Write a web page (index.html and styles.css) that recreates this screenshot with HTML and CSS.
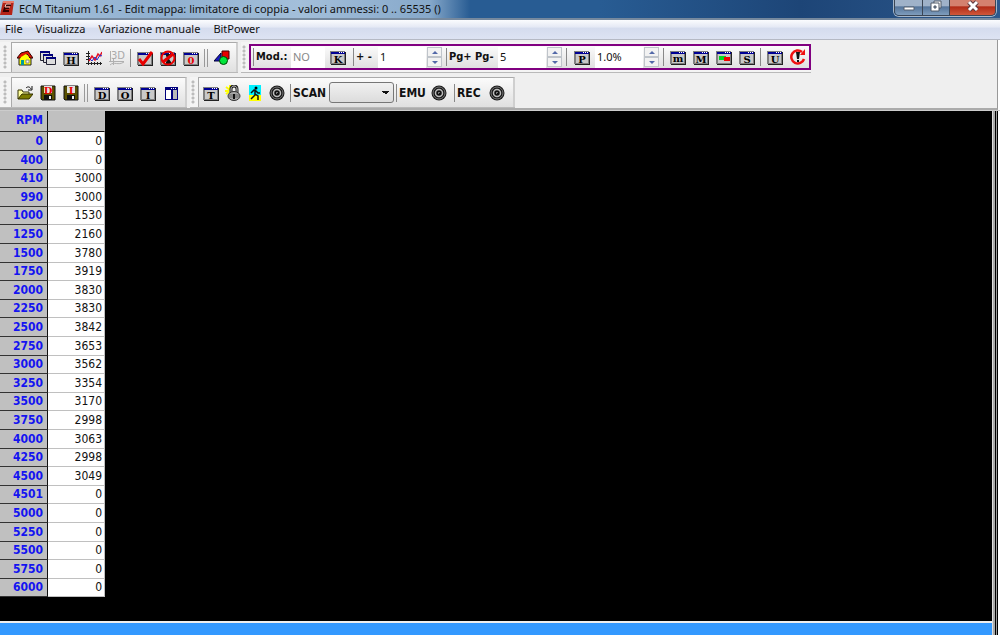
FILE: index.html
```html
<!DOCTYPE html>
<html lang="it">
<head>
<meta charset="utf-8">
<title>ECM Titanium 1.61</title>
<link rel="stylesheet" href="styles.css">
</head>
<body>
<svg class="defs" aria-hidden="true">
  <symbol id="win" viewBox="0 0 16 16">
    <path d="M0 2h15v13H0z" fill="#808080"/><path d="M2 5h12v9H2z" fill="#c9c9c9"/>
    <path d="M1 3h14v2H1z" fill="#000094"/><path d="M9 3h1v1H9zm2 0h1v1h-1zm2 0h1v1h-1z" fill="#fff"/>
    <path d="M15 3h1v13H1v-1h14z" fill="#222"/>
  </symbol>
  <symbol id="knob" viewBox="0 0 16 16">
    <circle cx="8" cy="8" r="7.500" fill="#1a1a1a"/><circle cx="8" cy="8" r="6" fill="none" stroke="#777"/>
    <circle cx="8" cy="8" r="3.500" fill="#111" stroke="#bdbdbd" stroke-width="1.500"/><path d="M7 7h2v1H8v1H7z" fill="#777"/>
  </symbol>
  <symbol id="disk" viewBox="0 0 16 16">
    <path d="M1 1h14v14H2l-1-1z" fill="#5a5200" stroke="#111"/><path d="M4 1h8v7H4z" fill="#e4e4e4"/>
    <path d="M4 10h8v5H4z" fill="#111"/><path d="M9 11h2v3H9z" fill="#eee"/>
  </symbol>
</svg>

<header class="titlebar">
  <svg class="logo" viewBox="0 0 14 16"><path d="M3 1h11l-2 14H0z" fill="#b52418"/><path d="M3 1h11v2H3z" fill="#e77a68"/><path d="M11 5H6L4 11h5M5 8h4" fill="none" stroke="#300" stroke-width="2"/><path d="M11 4H6L5 7h5" fill="none" stroke="#f5c8bc"/></svg>
  <h1>ECM Titanium 1.61 - Edit mappa: limitatore di coppia - valori ammessi: 0 .. 65535 ()</h1>
  <div class="winbtns">
    <button class="wb min" aria-label="Riduci"><svg viewBox="0 0 16 14"><path d="M3 7h10v3H3z" fill="#fff" stroke="#56616f"/></svg></button>
    <button class="wb max" aria-label="Ripristina"><svg viewBox="0 0 16 14"><path d="M6 1h7v7H6z" fill="#f4f4f4" stroke="#505b68"/><path d="M3 3h8v8H3z" fill="#fff" stroke="#505b68"/><path d="M6 6h2v2H6z" fill="#8195ac" stroke="#505b68"/></svg></button>
    <button class="wb close" aria-label="Chiudi"><svg viewBox="0 0 16 14"><path d="M4 2l8 8M12 2l-8 8" stroke="#5b3a40" stroke-width="5"/><path d="M4 2l8 8M12 2l-8 8" stroke="#fff" stroke-width="3"/></svg></button>
  </div>
</header>

<nav class="menu">
  <button>File</button><button>Visualizza</button><button>Variazione manuale</button><button>BitPower</button>
</nav>

<section class="bars">
  <div class="row">
    <div class="band"><i class="grip"></i>
      <div class="panel">
        <button class="tb" aria-label="Home"><svg viewBox="0 0 16 16"><path d="M2 7h12v8H2z" fill="#ff0" stroke="#222"/><path d="M0 8l4-5 7-2 5 7h-3l-3-4-6 4z" fill="#e21500" stroke="#300"/><path d="M4 7l5-3 3 3v2H3z" fill="#ff0"/><path d="M4 10h3v5H4z" fill="#009c9c"/><path d="M9 10h3v3H9z" fill="#fff" stroke="#888"/></svg></button>
        <button class="tb" aria-label="Finestre"><svg viewBox="0 0 16 16"><g fill="#ddd" stroke="#223"><path d="M.5 1.500h9v9h-9z"/><path d="M3.500 4.500h9v8h-9z"/><path d="M6.500 7.500h9v7h-9z"/></g><path d="M0 1h10v2H0zM3 4h10v2H3zM6 7h10v2H6z" fill="#00007c"/></svg></button>
        <button class="tb" aria-label="Hex"><svg viewBox="0 0 16 16"><use href="#win"/><text x="8" y="14">H</text></svg></button>
        <button class="tb" aria-label="Grafico"><svg viewBox="0 0 16 16"><path d="M2.500 1v14M0 13.500h16M0 3.500h4M0 6.500h4M0 9.500h4M5.500 12v3M8.500 12v3M11.500 12v3M14.500 12v3" stroke="#222" fill="none"/><path d="M3 11l3-5 3 4 3-6 2 2 2-4" stroke="#e81020" stroke-width="1.500" fill="none"/><path d="M3 8l3 3 3-4 2 3 3-5 2 1" stroke="#2030d0" fill="none"/></svg></button>
        <button class="tb" aria-label="Vista 3D" disabled><svg viewBox="0 0 16 16"><path d="M1.500 1v11M0 11.500h15M1 15c4-4 8 1 14-3M4.500 9v6" stroke="#b0b0b0" fill="none"/><text class="gray" x="9" y="9">3D</text></svg></button>
        <i class="sep"></i>
        <button class="tb" aria-label="Conferma"><svg viewBox="0 0 16 16"><use href="#win"/><path d="M2 9l4 5 9-12" fill="none" stroke="#e80000" stroke-width="3"/></svg></button>
        <button class="tb" aria-label="Annulla"><svg viewBox="0 0 16 16"><use href="#win"/><path d="M6 4h5v2l-2 3 2 3v2H6v-2l2-3-2-3z" fill="#111"/><circle cx="8" cy="8" r="6.500" fill="none" stroke="#e80000" stroke-width="2"/><path d="M3 12L13 4" stroke="#e80000" stroke-width="3"/></svg></button>
        <button class="tb" aria-label="Azzera"><svg viewBox="0 0 16 16"><use href="#win"/><text class="red" x="8" y="14">0</text></svg></button>
        <i class="sep dbl"></i>
        <button class="tb" aria-label="Forme"><svg viewBox="0 0 16 16"><path d="M8 1h7v8H8z" fill="#e80000" stroke="#400"/><path d="M0 11l7-8v8z" fill="#1818c0" stroke="#003"/><circle cx="9.500" cy="10.500" r="4" fill="#00e63c" stroke="#040"/></svg></button>
      </div>
    </div>
    <div class="band"><i class="grip"></i>
      <div class="panel purple">
        <i class="sep"></i>
        <label class="mod" for="mod">Mod.:</label><input id="mod" class="small" value="NO" disabled>
        <button class="tb wide" aria-label="K"><svg viewBox="0 0 16 16"><use href="#win"/><text x="8" y="14">K</text></svg></button>
        <i class="sep"></i>
        <label class="pm" for="step">+ -</label><input id="step" value="1">
        <span class="spin"><button aria-label="Più"></button><button aria-label="Meno"></button></span>
        <i class="sep"></i>
        <label class="pg" for="page">Pg+ Pg-</label><input id="page" value="5">
        <span class="spin"><button aria-label="Più"></button><button aria-label="Meno"></button></span>
        <i class="sep"></i>
        <button class="tb wide" aria-label="P"><svg viewBox="0 0 16 16"><use href="#win"/><text x="8" y="14">P</text></svg></button>
        <input aria-label="Percentuale" value="1.0%">
        <span class="spin"><button aria-label="Più"></button><button aria-label="Meno"></button></span>
        <i class="sep"></i>
        <button class="tb" aria-label="m"><svg viewBox="0 0 16 16"><use href="#win"/><text x="8" y="13">m</text></svg></button>
        <button class="tb" aria-label="M"><svg viewBox="0 0 16 16"><use href="#win"/><text x="8" y="14">M</text></svg></button>
        <button class="tb" aria-label="Colori"><svg viewBox="0 0 16 16"><use href="#win"/><path d="M3 7h7v4H3z" fill="#00d820"/><path d="M8 8h6v4H8z" fill="#f00000"/></svg></button>
        <button class="tb" aria-label="S"><svg viewBox="0 0 16 16"><use href="#win"/><text x="8" y="14">S</text></svg></button>
        <i class="sep"></i>
        <button class="tb" aria-label="U"><svg viewBox="0 0 16 16"><use href="#win"/><text x="8" y="14">U</text></svg></button>
        <button class="tb" aria-label="Ripristina valori"><svg viewBox="0 0 16 16"><path d="M12 3A6.500 6.500 0 1 0 14 10" fill="none" stroke="#f01010" stroke-width="2.500"/><path d="M10 6h5V0z" fill="#f01010"/><path d="M6 3h4l-1 7H7z" fill="#111"/><path d="M7 11h2v2H7z" fill="#111"/></svg></button>
      </div>
    </div>
  </div>
  <div class="row">
    <div class="band"><i class="grip"></i>
      <div class="panel">
        <button class="tb" aria-label="Apri"><svg viewBox="0 0 16 16"><path d="M1 14V5h4l1 2h6v3" fill="#ffff9c" stroke="#333000"/><path d="M1 14l4-5h11l-4 5z" fill="#7b7b00" stroke="#333000"/><path d="M9 3c2-2 4-1 5 1m1-3v4h-4" fill="none" stroke="#111"/></svg></button>
        <button class="tb" aria-label="Salva D"><svg viewBox="0 0 16 16"><use href="#disk"/><text class="red" x="8" y="9">D</text></svg></button>
        <button class="tb" aria-label="Salva I"><svg viewBox="0 0 16 16"><use href="#disk"/><text class="red" x="8" y="9">I</text></svg></button>
        <i class="sep dbl"></i>
        <button class="tb" aria-label="D"><svg viewBox="0 0 16 16"><use href="#win"/><text x="8" y="14">D</text></svg></button>
        <button class="tb" aria-label="O"><svg viewBox="0 0 16 16"><use href="#win"/><text x="8" y="14">O</text></svg></button>
        <button class="tb" aria-label="I"><svg viewBox="0 0 16 16"><use href="#win"/><text x="8" y="14">I</text></svg></button>
        <button class="tb" aria-label="Dividi"><svg viewBox="0 0 16 16"><path d="M2 2h13v13H2z" fill="#00007c"/><path d="M3 5h5v9H3z" fill="#fff"/><path d="M10 5h4v9h-4z" fill="#b8b8b8"/><path d="M8 3h1v1H8zm2 0h1v1h-1zm2 0h1v1h-1z" fill="#fff"/></svg></button>
      </div>
    </div>
    <div class="band second"><i class="grip"></i>
      <div class="panel">
        <button class="tb" aria-label="T"><svg viewBox="0 0 16 16"><use href="#win"/><text x="8" y="14">T</text></svg></button>
        <button class="tb" aria-label="Blocca"><svg viewBox="0 0 16 16"><path d="M1 2l4 3M0 6h4M5 0v4M1 9l3-2" stroke="#ff0" stroke-width="2"/><path d="M6 8V4c0-4 6-4 6 0v4" fill="none" stroke="#222" stroke-width="3"/><path d="M6 8V4c0-4 6-4 6 0v4" fill="none" stroke="#bbb"/><ellipse cx="9" cy="11" rx="6" ry="4.500" fill="#a8a8a8" stroke="#333"/><path d="M4 10h10M4 12h10" stroke="#666"/><path d="M8 9h2v5H8z" fill="#111"/></svg></button>
        <button class="tb" aria-label="Esegui"><svg viewBox="0 0 16 16"><path d="M2 0h12v10H2z" fill="#00f0ff"/><path d="M2 10h12v6H2z" fill="#ff0"/><circle cx="9" cy="3" r="1.500"/><path d="M8 5v5l-4 4M8 9l3 2v4M4 8l3-3h1l3 3h2" fill="none" stroke="#111" stroke-width="1.500"/></svg></button>
        <button class="tb" aria-label="Sonda"><svg viewBox="0 0 16 16"><use href="#knob"/></svg></button>
        <i class="sep"></i>
        <label class="scan" for="scan">SCAN</label>
        <select id="scan"><option></option></select>
        <i class="sep"></i>
        <span class="txt">EMU</span>
        <button class="tb wide" aria-label="EMU"><svg viewBox="0 0 16 16"><use href="#knob"/></svg></button>
        <i class="sep"></i>
        <span class="txt">REC</span>
        <button class="tb wide" aria-label="REC"><svg viewBox="0 0 16 16"><use href="#knob"/></svg></button>
      </div>
    </div>
  </div>
</section>

<main class="work">
  <table>
    <thead><tr><th scope="col">RPM</th><td></td></tr></thead>
    <tbody>
      <tr><th scope="row">0</th><td>0</td></tr>
      <tr><th scope="row">400</th><td>0</td></tr>
      <tr><th scope="row">410</th><td>3000</td></tr>
      <tr><th scope="row">990</th><td>3000</td></tr>
      <tr><th scope="row">1000</th><td>1530</td></tr>
      <tr><th scope="row">1250</th><td>2160</td></tr>
      <tr><th scope="row">1500</th><td>3780</td></tr>
      <tr><th scope="row">1750</th><td>3919</td></tr>
      <tr><th scope="row">2000</th><td>3830</td></tr>
      <tr><th scope="row">2250</th><td>3830</td></tr>
      <tr><th scope="row">2500</th><td>3842</td></tr>
      <tr><th scope="row">2750</th><td>3653</td></tr>
      <tr><th scope="row">3000</th><td>3562</td></tr>
      <tr><th scope="row">3250</th><td>3354</td></tr>
      <tr><th scope="row">3500</th><td>3170</td></tr>
      <tr><th scope="row">3750</th><td>2998</td></tr>
      <tr><th scope="row">4000</th><td>3063</td></tr>
      <tr><th scope="row">4250</th><td>2998</td></tr>
      <tr><th scope="row">4500</th><td>3049</td></tr>
      <tr><th scope="row">4501</th><td>0</td></tr>
      <tr><th scope="row">5000</th><td>0</td></tr>
      <tr><th scope="row">5250</th><td>0</td></tr>
      <tr><th scope="row">5500</th><td>0</td></tr>
      <tr><th scope="row">5750</th><td>0</td></tr>
      <tr><th scope="row">6000</th><td>0</td></tr>
    </tbody>
  </table>
  <div class="edge"></div>
</main>
<footer class="status"><div class="blue"></div><div class="edge"></div></footer>
</body>
</html>
```
FILE: styles.css
```css
* { box-sizing: border-box; }
body {
  margin: 0;
  min-height: 100vh;
  display: flex;
  flex-direction: column;
  background: #fff;
  color: #111;
  font: 12px/16px "DejaVu Sans Condensed", "Noto Sans", sans-serif;
}
button, input, select { font: inherit; color: inherit; margin: 0; padding: 0; border: 0; background: none; }
.defs { position: absolute; width: 0; height: 0; }

.titlebar {
  display: flex;
  align-items: flex-start;
  height: 20px;
  border-bottom: 2px solid #76899e;
  background: linear-gradient(90deg, #a9c3dc 0, #8fb0d0 160px, #a3bfda 300px, #86a8ca 430px, #285c93 470px, #285c93 600px, #1d4577 800px, #2c588c 1000px);
}
.logo { width: 14px; height: 16px; }
.titlebar h1 { flex: 1; margin: 0 0 0 5px; font: 11px/17px "Noto Sans", sans-serif; white-space: nowrap; }
.winbtns {
  display: flex;
  height: 16px;
  margin-right: 4px;
  border: 1px solid #3b4655;
  border-top: 0;
  border-radius: 0 0 5px 5px;
  overflow: hidden;
  box-shadow: 0 0 0 1px #a5b7cb;
}
.wb { width: 27px; display: flex; justify-content: center; background: linear-gradient(#9fb2c9 40%, #54749a 45%, #7f9dbd); }
.wb + .wb { border-left: 1px solid #3b4655; }
.wb svg { width: 16px; height: 14px; }
.wb.close { width: 46px; background: linear-gradient(#d4816f 40%, #b12b17 45%, #d0573a); }

.menu {
  display: flex;
  gap: 13px;
  height: 20px;
  padding-left: 5px;
  border-bottom: 1px solid #b5b9c4;
  background: linear-gradient(#fbfcfe, #e6eaf5 35%, #d5dcee 45%, #dde3f3);
  font: 11px/16px "Noto Sans", sans-serif;
}
.menu button { height: 18px; }

.bars {
  display: flex;
  flex-direction: column;
  gap: 2px;
  margin-right: 2px;
  padding-top: 2px;
  border-right: 1px solid #999;
  border-bottom: 2px solid #ababab;
  background: #efefef;
}
.row { display: flex; gap: 3px; }
.row + .row { padding-top: 2px; }
.band { display: flex; height: 31px; border-bottom: 1px solid #b9b9b9; background: #f4f4f4; }
.grip { width: 8px; margin: 3px 0 3px 3px; background: radial-gradient(circle, #bcbcbc 1px, transparent 2px) 0 0 / 4px 4px repeat-y; }
.band + .band .grip { width: 7px; margin-left: 1px; }
.panel {
  display: flex;
  align-items: center;
  padding: 0 3px 0 1px;
  border-left: 1px solid #aaa;
  border-top: 1px solid #aaa;
  border-right: 2px solid #cfcfcf;
  background: linear-gradient(#fbfbfb, #e0e0e0);
}
.purple { margin: 2px 0; padding: 0; border: 2px solid #800080; }
.tb { display: flex; justify-content: center; align-items: center; width: 23px; height: 24px; flex: none; }
.second .tb { width: 22px; }
.tb.wide { width: 26px; }
.tb svg { width: 16px; height: 16px; }
.tb text { font: bold 10px "DejaVu Serif", serif; text-anchor: middle; fill: #000; }
.tb text.red { fill: #e80000; }
.tb text.gray { font: 10px "DejaVu Sans", sans-serif; fill: #aaa; }
.sep { flex: none; width: 1px; height: 18px; margin: 0 2px; background: #888; }
.sep.dbl { width: 4px; border: 1px solid #999; border-width: 0 1px; background: none; }
label, .txt { font-weight: bold; white-space: nowrap; }
label { font-size: 11px; }
.mod { width: 35px; }
.pm { width: 22px; }
.pg { width: 49px; }
.scan { width: 36px; font-size: 12px; }
.txt { width: 27px; }
input { width: 48px; height: 21px; padding: 0 2px 2px; background: #fff; font: 11px/18px "Noto Sans", sans-serif; }
input.small { width: 34px; }
input:disabled { color: #888; }
.spin { display: flex; flex-direction: column; width: 15px; margin: 0 2px 0 1px; }
.spin button { display: flex; justify-content: center; align-items: center; height: 10px; border: 1px solid #bfc4ca; background: #f2f2f2; }
.spin button::before { content: ""; border: 3px solid transparent; border-top: 0; border-bottom: 3px solid #5268a8; }
.spin button + button::before { border-bottom: 0; border-top: 3px solid #5268a8; }
select {
  appearance: none;
  width: 65px;
  height: 21px;
  border: 1px solid #777;
  border-radius: 3px;
  background: linear-gradient(45deg, transparent 50%, #111 50%) 52px 8px / 4px 4px no-repeat, linear-gradient(-45deg, transparent 50%, #111 50%) 56px 8px / 4px 4px no-repeat, linear-gradient(#f1f1f1, #dcdcdc);
}

.work { flex: 1; display: flex; justify-content: space-between; align-items: flex-start; background: #000; border-top: 1px solid #ccc; }
table { border-collapse: separate; border-spacing: 0; text-align: right; }
th, td { padding: 0; line-height: 17px; }
th { width: 48px; padding-right: 4px; background: #c0c0c0; color: #1414f0; border-right: 1px solid #111; border-bottom: 1px solid #333; }
td { width: 57px; padding-right: 2px; background: #fff; border-right: 1px solid #c0c0c0; border-bottom: 1px solid #c0c0c0; }
thead th { height: 21px; padding-bottom: 2px; }
thead td { background: #c0c0c0; border-bottom-color: #111; }
tbody tr { height: 19px; }
tbody tr:nth-child(5n), tbody tr:nth-child(5n + 3) { height: 18px; }
.edge { align-self: stretch; width: 8px; background: linear-gradient(90deg, #ddd 1px, #aaa 1px 3px, #000 3px 4px, #999 4px 5px, #000 5px 6px, #fff 6px); }
.status { display: flex; height: 14px; background: #3399ff; }
.blue { flex: 1; border-top: 2px solid #eee; }
```
